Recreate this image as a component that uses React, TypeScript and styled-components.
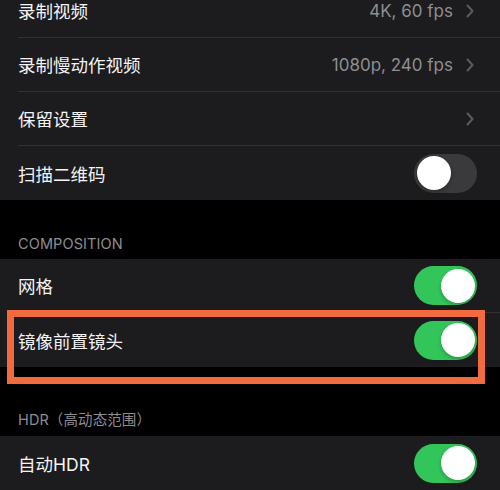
import React from "react";
import styled, { createGlobalStyle } from "styled-components";

const Global = createGlobalStyle`
  html, body { margin: 0; padding: 0; background: #000; }
  body { width: 500px; height: 490px; overflow: hidden; }
  * { box-sizing: border-box; }
`;

const Page = styled.div`
  position: relative;
  width: 500px;
  height: 490px;
  overflow: hidden;
  background: #000;
  font-family: Inter, "Noto Sans CJK SC", sans-serif;
  -webkit-font-smoothing: antialiased;
`;

const Group = styled.div<{ $offset?: number }>`
  background: #1c1c1e;
  margin-top: ${(p) => p.$offset ?? 0}px;
`;

const Header = styled.div<{ $h: number }>`
  height: ${(p) => p.$h}px;
  display: flex;
  align-items: flex-end;
  padding: 0 18px 7px;
  color: #8d8d92;
  font-size: 14.5px;
  letter-spacing: 0.1px;
`;

const Row = styled.div`
  height: 54px;
  display: flex;
  align-items: stretch;
  padding-left: 18px;
`;

const RowInner = styled.div<{ $sep: boolean }>`
  flex: 1;
  display: flex;
  align-items: center;
  padding-right: 23px;
  border-bottom: ${(p) => (p.$sep ? "1px solid #323235" : "none")};
`;

const Label = styled.span`
  flex: 1;
  color: #f4f4f6;
  font-size: 17.5px;
  font-family: Inter, "Noto Sans CJK SC", sans-serif;
`;

const Value = styled.span`
  color: #8e8e93;
  font-size: 17px;
  margin-right: 13px;
`;

const Chevron = styled.svg`
  width: 8px;
  height: 14px;
  margin-right: 3px;
`;

const Track = styled.div<{ $on: boolean }>`
  width: 63px;
  height: 39px;
  border-radius: 20px;
  background: ${(p) => (p.$on ? "#32c65a" : "#3a3a3d")};
  display: flex;
  align-items: center;
  justify-content: ${(p) => (p.$on ? "flex-end" : "flex-start")};
  padding: 0 2.5px;
`;

const Knob = styled.div`
  width: 34px;
  height: 34px;
  border-radius: 50%;
  background: #fff;
  box-shadow: 0 2px 4px rgba(0, 0, 0, 0.25);
`;

const Highlight = styled.div`
  position: absolute;
  left: 7px;
  top: 310px;
  width: 478px;
  height: 74px;
  border: 7.5px solid #f26b3f;
  pointer-events: none;
`;

type Item = { label: string; value?: string; chevron?: boolean; toggle?: boolean };

const SettingRow = ({ item, sep }: { item: Item; sep: boolean }) => (
  <Row>
    <RowInner $sep={sep}>
      <Label>{item.label}</Label>
      {item.value && <Value>{item.value}</Value>}
      {item.chevron && (
        <Chevron viewBox="0 0 8 14">
          <path d="M1.5 1.5 L6.5 7 L1.5 12.5" fill="none" stroke="#5b5b5f" strokeWidth="2" strokeLinecap="round" strokeLinejoin="round" />
        </Chevron>
      )}
      {item.toggle !== undefined && (
        <Track $on={item.toggle}>
          <Knob />
        </Track>
      )}
    </RowInner>
  </Row>
);

const groups: { header?: string; h?: number; offset?: number; items: Item[] }[] = [
  {
    offset: -16,
    items: [
      { label: "录制视频", value: "4K, 60 fps", chevron: true },
      { label: "录制慢动作视频", value: "1080p, 240 fps", chevron: true },
      { label: "保留设置", chevron: true },
      { label: "扫描二维码", toggle: false },
    ],
  },
  {
    header: "COMPOSITION",
    h: 59,
    items: [
      { label: "网格", toggle: true },
      { label: "镜像前置镜头", toggle: true },
    ],
  },
  {
    header: "HDR（高动态范围）",
    h: 69,
    items: [{ label: "自动HDR", toggle: true }],
  },
];

export default function App() {
  return (
    <Page>
      <Global />
      {groups.map((g, gi) => (
        <React.Fragment key={gi}>
          {g.header && <Header $h={g.h ?? 59}>{g.header}</Header>}
          <Group $offset={g.offset}>
            {g.items.map((it, i) => (
              <SettingRow key={i} item={it} sep={i < g.items.length - 1} />
            ))}
          </Group>
        </React.Fragment>
      ))}
      <Highlight />
    </Page>
  );
}
